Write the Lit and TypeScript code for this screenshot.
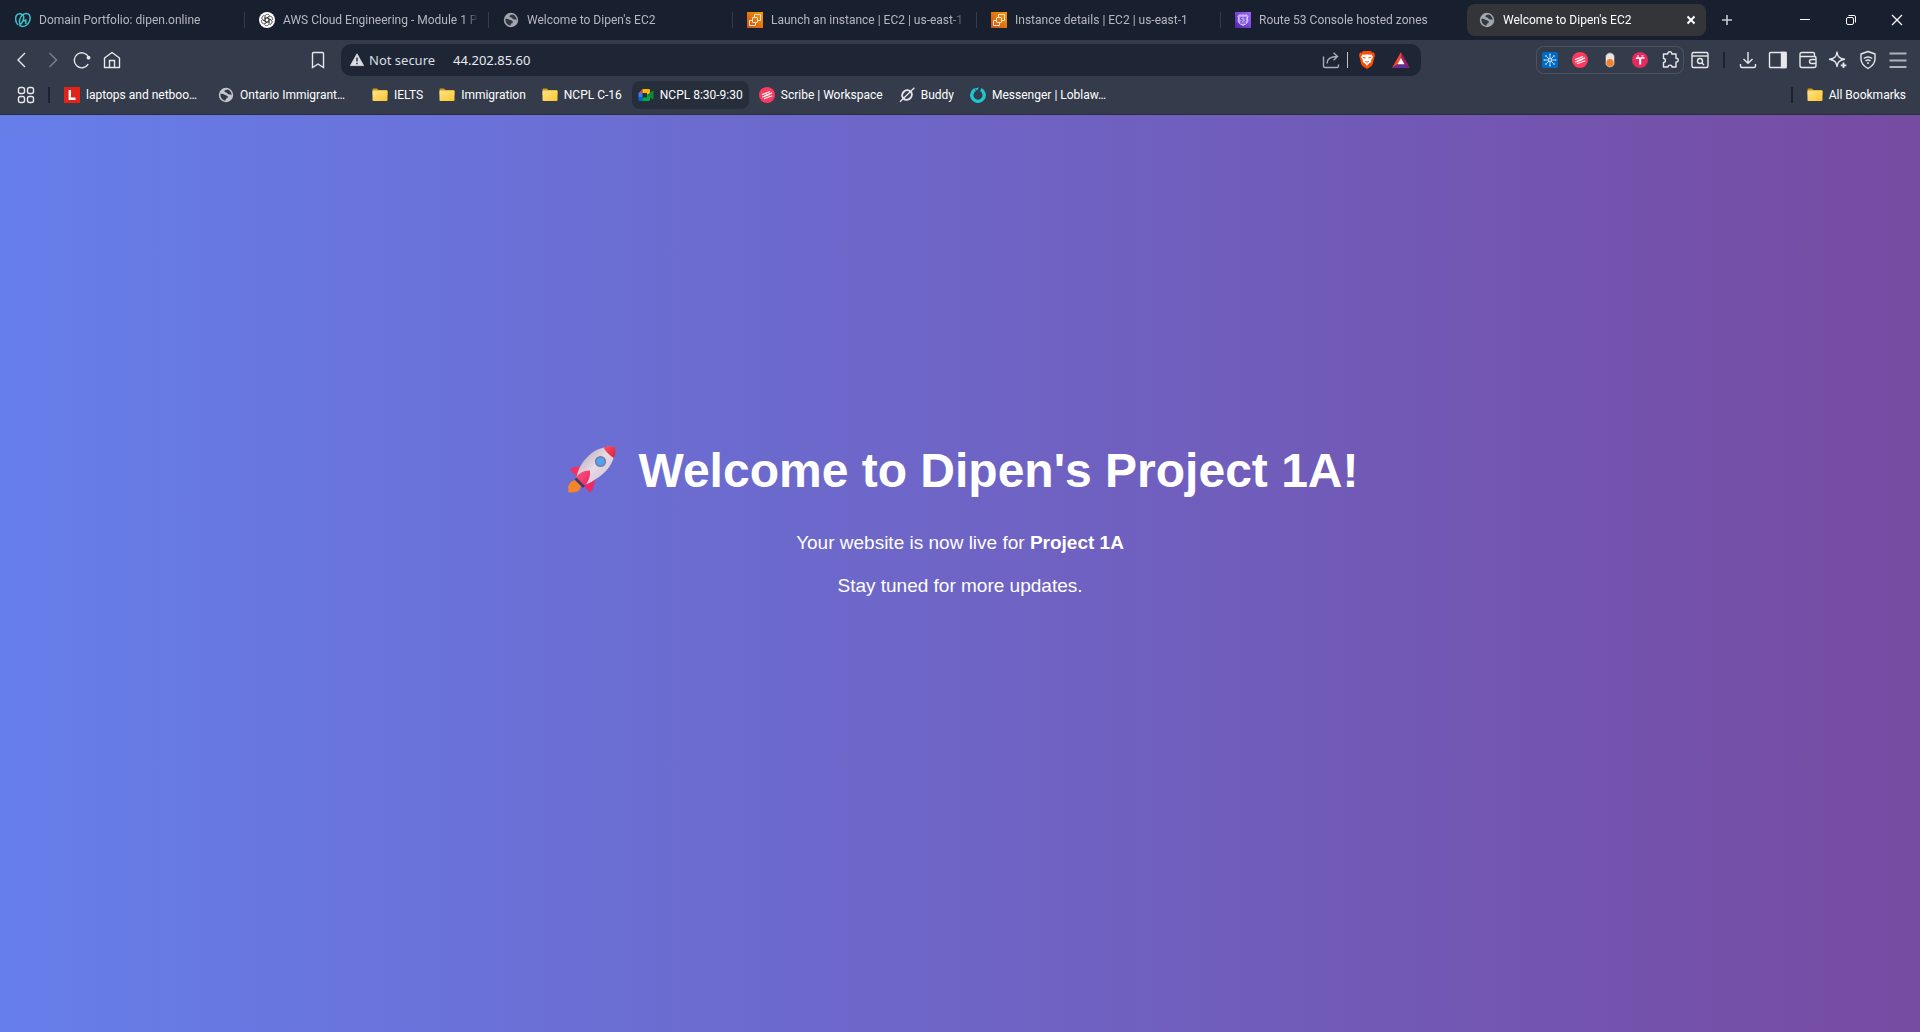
import { LitElement, html, svg, css, TemplateResult } from "lit";
import { customElement, property } from "lit/decorators.js";
import { classMap } from "lit/directives/class-map.js";

const icon = (size: number, body: TemplateResult, cls = "line") => html`
  <svg class=${cls} width=${size} height=${size} viewBox="0 0 ${size} ${size}" aria-hidden="true">${body}</svg>
`;

const globe = (tone: string) =>
  icon(16, svg`
    <circle cx="8" cy="8" r="7.200" fill=${tone} />
    <path d="M2.400 7 C3 6.400 4.800 6.600 7.200 8 C9 8.600 10.200 9 9.800 10.400 C9.400 11.400 8 11 7.800 12.200 L7.600 13.600 C4.400 13.400 2.200 10.600 2.400 7 Z" fill="#303844" />
    <path d="M9.600 2.600 C8 3.200 6.800 3 6.400 4.200 C6.400 5.600 8.400 5 9 6 C9.600 7 10.400 7.600 11.600 7.400 C12.600 7.200 13 8.200 13.600 8.400 C13.800 5.600 12.200 3.400 9.600 2.600 Z" fill="#303844" />
  `, "art");

const ec2 = icon(16, svg`
  <defs><linearGradient id="o" x1="0" y1="1" x2="1" y2="0"><stop offset="0" stop-color="#c8511b" /><stop offset="1" stop-color="#f90" /></linearGradient></defs>
  <rect width="16" height="16" fill="url(#o)" />
  <g fill="none" stroke="#ffe6cc" stroke-width="1">
    <rect x="5.500" y="5.500" width="5" height="5" rx=".5" />
    <path d="M7.500 5.500 V2.500 H13.500 V8.500 H10.500 M5.500 8.500 H2.500 V13.500 H8.500 V10.500" />
  </g>
`, "art");

const folder = icon(16, svg`
  <defs><linearGradient id="f" x1="0" y1="0" x2="1" y2="1"><stop offset="0" stop-color="#ffe48a" /><stop offset="1" stop-color="#fcc62f" /></linearGradient></defs>
  <path d="M.5 2.500 Q.5 1.500 1.500 1.500 H5 L6.500 3 H14.500 Q15.500 3 15.500 4 V8 H.5 Z" fill="#d39a17" />
  <rect x=".5" y="3.500" width="15" height="10.500" rx="1" fill="url(#f)" />
`, "art");

const scribe = icon(16, svg`
  <circle cx="8" cy="8" r="8" fill="#fb3a5d" />
  <path d="M3 7.600 L11 4.500 M5.500 8.700 L13 5.900 M3.200 10.300 L10.500 7.500 M5 11.800 L13.200 8.700" stroke="#fff" stroke-width="1.200" fill="none" />
`, "art");

const art: Record<string, TemplateResult> = {
  godaddy: icon(16, svg`
    <path d="M3.200 13 C.4 10.500 -.2 5.500 1.800 3 C3.500 1 6.500 1.400 8.200 3.400 C9.800 5.500 7.500 10.800 5.400 12.600 C3.500 9.800 4.600 5.200 7.600 2.900 C10 1 13.200 1 14.500 3.200 C16 6.500 14.600 11 11.600 13 C9 14.900 6.400 14.700 4.200 13.400 M8.400 9 L10.800 8 V12" fill="none" stroke="#3fc1c9" stroke-width="1.500" />
  `, "art"),
  gpt: icon(16, svg`
    <circle cx="8" cy="8" r="8" fill="#fff" />
    <g fill="none" stroke="#333" stroke-width=".8">
      ${[0, 60, 120, 180, 240, 300].map((a) => svg`<path transform="rotate(${a} 8 8)" d="M6 8.800 V4.600 C6 2 9.400 1.600 10.600 3.600 M6.200 6.800 L9.900 4.700" />`)}
    </g>
  `, "art"),
  globe: globe("#a3a7ad"),
  globeLight: globe("#c3c7cc"),
  ec2,
  route53: icon(16, svg`
    <defs><linearGradient id="r" x1="0" y1="1" x2="1" y2="0"><stop offset="0" stop-color="#4d27aa" /><stop offset="1" stop-color="#a166ff" /></linearGradient></defs>
    <rect width="16" height="16" fill="url(#r)" />
    <path d="M4.500 2.800 Q6.200 3.800 8 2.800 Q9.800 3.800 11.500 2.800 L13 4.500 Q12 6 12.800 8 Q13.600 11 8 13.400 Q2.400 11 3.200 8 Q4 6 3 4.500 Z" fill="#b79cf0" stroke="#e3d8ff" stroke-width=".9" />
    <path d="M7.300 5.500 H5.600 V7.300 Q7.400 7 7.300 8.600 Q7 9.900 5.200 9.300 M8.800 5.500 H10.800 L9.600 7.200 Q11 7.600 10.600 8.900 Q9.800 9.900 8.700 9.200 M5 11 H11" fill="none" stroke="#5a35b5" stroke-width=".8" />
  `, "art"),
  laptop: icon(16, svg`<rect width="16" height="16" fill="#e2231a" /><path d="M5.800 3 V11.800 H11.500" fill="none" stroke="#fff" stroke-width="2.400" />`, "art"),
  folder,
  meet: icon(16, svg`
    <path d="M4.500 2 V6 H.5 Z" fill="#ea4335" />
    <path d="M.5 6 H4.500 V10.500 H.5 Z" fill="#2684fc" />
    <path d="M.5 10.500 H4.500 V14 H1.700 Q.5 14 .5 12.800 Z" fill="#0066da" />
    <path d="M4.500 2 H10.800 Q12 2 12 3.200 V6.500 L9 8 V6 H4.500 Z" fill="#ffba00" />
    <path d="M4.500 10.500 H9 V8 L12 6.500 V12.800 Q12 14 10.800 14 H4.500 Z" fill="#00ac47" />
    <path d="M9.500 8 L14.600 3.800 Q15.500 3.300 15.500 4.300 V11.700 Q15.500 12.700 14.600 12.200 Z" fill="#0b8a3c" />
  `, "art"),
  scribe,
  buddy: icon(16, svg`
    <ellipse cx="8" cy="8" rx="5" ry="4.600" transform="rotate(-45 8 8)" fill="none" stroke="#e4e6e9" stroke-width="2" />
    <path d="M1 14.800 L15.400 .8" stroke="#e4e6e9" stroke-width="1.300" />
  `, "art"),
  messenger: icon(16, svg`<path d="M10.800 2.600 A6.200 6.200 0 1 1 5.200 2.600" fill="none" stroke="#1ec6cf" stroke-width="3.400" /><path d="M4.500 1.500 L9 .6 L7 3.500 Z" fill="#1ec6cf" />`, "art"),
  spark: icon(16, svg`
    <rect width="16" height="16" rx="1.500" fill="#0069c4" />
    ${[0, 45, 90, 135, 180, 225, 270, 315].map((a) => svg`
      <g transform="rotate(${a} 8 8)"><path d="M8 6.500 V3" stroke="#e6f3ff" stroke-width=".9" /><circle cx="8" cy="2.300" r=".8" fill="#e6f3ff" /></g>
    `)}
    <circle cx="8" cy="8" r="1.500" fill="none" stroke="#e6f3ff" stroke-width=".8" />
  `, "art"),
  toggle: icon(16, svg`<rect x="3.500" y=".8" width="9" height="14.400" rx="4.500" fill="#e9e7e5" stroke="#6b6259" stroke-width=".8" /><circle cx="8" cy="10.700" r="3.600" fill="#f5812a" />`, "art"),
  palm: icon(16, svg`
    <circle cx="8" cy="8" r="8" fill="#e52a5c" />
    <path d="M8.200 12.500 V7" fill="none" stroke="#fff" stroke-width="2" />
    <path d="M4 6.800 Q6 4.800 8.200 6.800 Q10.400 4.800 12.400 6.400" fill="none" stroke="#fff" stroke-width="1.600" />
    <path d="M5 4 H7 M9.500 3.800 H11.500" stroke="#fff" stroke-width="1" />
  `, "art"),
  brave: icon(20, svg`
    <path d="M6 1 H14 L15.600 2.800 L17 2.600 L18 5 L17.500 7 L15.800 14 Q15.200 15.700 13.500 16.800 L10 19 L6.500 16.800 Q4.800 15.700 4.200 14 L2.500 7 L2 5 L3 2.600 L4.400 2.800 Z" fill="#fb4b04" />
    <path d="M5.500 4.500 L8 4.800 L10 4.300 L12 4.800 L14.500 4.500 L16 7 L14 10.500 L14.300 12 L12 13.600 L10 15.800 L8 13.600 L5.700 12 L6 10.500 L4 7 Z" fill="#fff" />
    <path d="M5.800 7.300 L8.500 8 M14.200 7.300 L11.500 8 M8.300 11.300 L10 12.300 L11.700 11.300" stroke="#fb4b04" stroke-width="1" fill="none" />
  `, "art"),
  bat: icon(20, svg`
    <path d="M10 2 L1 18 L7 14 L10 8.500 Z" fill="#ff4724" />
    <path d="M10 2 L19 18 L13 14 L10 8.500 Z" fill="#9e1f63" />
    <path d="M1 18 H19 L13 14 H7 Z" fill="#662d91" />
    <path d="M10 8 L6.500 14.300 H13.500 Z" fill="#fff" />
  `, "art"),
};

const glyphs: Record<string, TemplateResult> = {
  back: icon(20, svg`<path d="M13 3 L6 10 L13 17" />`),
  forward: icon(20, svg`<path d="M7.500 3 L14.500 10 L7.500 17" />`),
  reload: icon(20, svg`<path d="M16.600 7.200 A7.500 7.500 0 1 0 16.200 14.200" /><circle cx="16.500" cy="7.700" r="1.900" fill="currentColor" stroke="none" />`),
  home: icon(20, svg`<path d="M2.500 8 L10 2.500 L17.500 8 V17.500 H2.500 Z" stroke-linejoin="round" /><path d="M7.500 17.500 V10.500 H12.500 V17.500" />`),
  bookmark: icon(20, svg`<path d="M4.500 3.500 Q4.500 2.500 5.500 2.500 H14.500 Q15.500 2.500 15.500 3.500 V17.500 L10 14 L4.500 17.500 Z" />`),
  share: icon(20, svg`<path d="M2.500 6.500 V16 Q2.500 17.500 4 17.500 H16 Q17.500 17.500 17.500 16 V14.500" /><path d="M6 13.500 C6 9 9 6.500 16.500 6.500 M12.500 2.800 L16.500 6.500 L12.500 10.200" />`),
  puzzle: icon(20, svg`<path d="M3.500 4 H7.800 C7.500 1 12 1 11.800 4 H16 V8.200 C19 8 19 12.300 16 12 V17 H12 C12.200 14.500 8 14.500 8 17 H3.500 V12.500 C6 12.500 6 8.500 3.500 8.500 Z" stroke-linejoin="round" />`),
  tabSearch: icon(20, svg`<rect x="2" y="2.500" width="16" height="15" rx="1.500" /><path d="M2 6 H18" /><circle cx="10" cy="11" r="2.500" /><path d="M12 13 L14 15" />`),
  download: icon(20, svg`<path d="M10 2 V13 M5.500 9 L10 13.300 L14.500 9 M2.500 14 V16 Q2.500 17.500 4 17.500 H16 Q17.500 17.500 17.500 16 V14" />`),
  sidebar: icon(20, svg`<rect x="1.500" y="2.500" width="16.500" height="15" rx="1" /><path d="M13.500 2.500 H18 V17.500 H13.500 Z" fill="currentColor" />`),
  wallet: icon(20, svg`<path d="M16.500 6.500 V4 Q16.500 2.500 15 2.500 H4 Q2 2.500 2 4.500 V15.500 Q2 17.500 4 17.500 H16 Q18 17.500 18 15.500 V8 Q18 6.500 16.500 6.500 H2.500 M18 9.500 H13.500 Q11.500 9.500 11.500 11.500 Q11.500 13.500 13.500 13.500 H18" />`),
  sparkle: icon(20, svg`<path d="M9 2 C9.600 6.500 11 8.200 16.500 9.300 C11 10.500 9.600 12 9 16.500 C8.400 12 7 10.500 1.500 9.300 C7 8.200 8.400 6.500 9 2 Z" stroke-linejoin="round" /><path d="M15.500 12.500 V18 M12.800 15.300 H18.300" stroke-width="1.800" />`),
  vpn: icon(20, svg`<path d="M10 1.500 L17 4 V9.500 Q16.500 15 10 18.500 Q3.500 15 3 9.500 V4 Z" stroke-linejoin="round" /><path d="M5.800 8.500 Q10 5.500 14.200 8.500 M7.500 10.900 Q10 9.200 12.500 10.900" /><circle cx="10" cy="13" r="1" fill="currentColor" stroke="none" />`),
  menu: icon(20, svg`<g stroke-width="1.800"><path d="M1.500 3.500 H18.500 M1.500 10.500 H18.500 M1.500 17 H18.500" /></g>`),
  grid: icon(20, svg`<rect x="2.500" y="2.500" width="6" height="6" rx="2" /><rect x="11.500" y="2.500" width="6" height="6" rx="2" /><rect x="2.500" y="11.500" width="6" height="6" rx="2" /><rect x="11.500" y="11.500" width="6" height="6" rx="2" />`),
  close: icon(16, svg`<path d="M4.500 4.500 L11.500 11.500 M11.500 4.500 L4.500 11.500" stroke-width="2" />`),
  plus: icon(16, svg`<path d="M8 3 V13 M3 8 H13" stroke-width="1.600" />`),
  minimize: icon(16, svg`<path d="M3 7.500 H13" stroke-width="1" />`),
  restore: icon(16, svg`<rect x="3.500" y="5.500" width="7" height="7" rx="1.500" stroke-width="1" /><path d="M5.500 3.500 H11 Q12.500 3.500 12.500 5 V10.500" stroke-width="1" />`),
  quit: icon(16, svg`<path d="M3 3 L13 13 M13 3 L3 13" stroke-width="1.200" />`),
  warning: icon(14, svg`<path d="M7 .8 L13.600 12.600 H.4 Z" fill="currentColor" stroke-linejoin="round" stroke-width=".8" /><path d="M7 4.500 V8.500 M7 9.800 V11.300" stroke="#1e2636" stroke-width="1.400" />`),
};

const rocket = html`
  <svg class="rocket" viewBox="0 0 64 60" role="img" aria-label="rocket">
    <defs>
      <linearGradient id="hull" x1="0" y1="0" x2="1" y2="1"><stop offset=".15" stop-color="#b9aebb" /><stop offset=".5" stop-color="#e6dbe6" /><stop offset="1" stop-color="#cdb9d2" /></linearGradient>
      <linearGradient id="nose" x1="0" y1="0" x2="1" y2="1"><stop offset="0" stop-color="#ff4f63" /><stop offset="1" stop-color="#d81f3f" /></linearGradient>
      <linearGradient id="fin" x1="0" y1="0" x2="1" y2="1"><stop offset="0" stop-color="#ff5a78" /><stop offset="1" stop-color="#e8206a" /></linearGradient>
    </defs>
    <path d="M14 40 Q8 42 7 47 Q8 49 7 52 Q10 53 13 52 Q18 53 20 46 Z" fill="#f5852a" />
    <path d="M8.500 29 Q14 27 19 26 L16 36 Q12 34 8.500 29 Z" fill="#f5305c" />
    <path d="M34 38 Q34 46 29.500 52.500 Q25 50 23 45 Z" fill="#ee2867" />
    <path d="M53 7 C41 5 29 12 22 22 Q17 29 15.500 37 L24 45 Q31 42 38 37 C49 29 55 19 53 7 Z" fill="url(#hull)" />
    <path d="M42.500 7.500 Q48 5.500 53.500 6.500 Q55.500 12 53 18 Q46 14 42.500 7.500 Z" fill="url(#nose)" />
    <circle cx="39.500" cy="21.500" r="5.600" fill="#777b99" /><circle cx="39.500" cy="21.500" r="3.900" fill="#4fa3f7" />
    <path d="M14.500 38 Q20 30 29 30.500 Q30 39 23 47 Z" fill="url(#fin)" />
    <path d="M13.500 39.500 L15.500 37.500 L24 46 L22 48 Z" fill="#3f3b66" />
  </svg>
`;

interface Tab { title: string; icon: string; active?: boolean }
interface Bookmark { title: string; icon: string; wide?: boolean; current?: boolean }

const tabs: Tab[] = [
  { title: "Domain Portfolio: dipen.online", icon: "godaddy" },
  { title: "AWS Cloud Engineering - Module 1 P", icon: "gpt" },
  { title: "Welcome to Dipen's EC2", icon: "globe" },
  { title: "Launch an instance | EC2 | us-east-1", icon: "ec2" },
  { title: "Instance details | EC2 | us-east-1", icon: "ec2" },
  { title: "Route 53 Console hosted zones", icon: "route53" },
  { title: "Welcome to Dipen's EC2", icon: "globe", active: true },
];

const bookmarks: Bookmark[] = [
  { title: "laptops and netboo…", icon: "laptop", wide: true },
  { title: "Ontario Immigrant…", icon: "globeLight", wide: true },
  { title: "IELTS", icon: "folder" },
  { title: "Immigration", icon: "folder" },
  { title: "NCPL C-16", icon: "folder" },
  { title: "NCPL 8:30-9:30", icon: "meet", current: true },
  { title: "Scribe | Workspace", icon: "scribe" },
  { title: "Buddy", icon: "buddy" },
  { title: "Messenger | Loblaw…", icon: "messenger", wide: true },
];

const shared = css`
  * { box-sizing: border-box; }
  button { font: inherit; color: inherit; background: none; border: 0; padding: 0; }
  svg { display: block; flex: none; }
  .line { fill: none; stroke: currentColor; stroke-width: 1.4px; }
`;

@customElement("tab-strip")
export class TabStrip extends LitElement {
  @property({ attribute: false }) tabs: Tab[] = [];

  static styles = [shared, css`
    :host { display: flex; align-items: center; height: 40px; padding-left: 3px; background: #18202f; color: #b5b9bf; }
    .tabs { display: flex; flex: 0 1 1708px; min-width: 0; }
    .slot { flex: 1 1 0; min-width: 0; display: flex; align-items: center; }
    .slot::after { content: ""; flex: none; width: 1px; height: 16px; margin: 0 2px; background: #353c48; }
    .slot.bare::after { background: none; }
    .tab { flex: 1; min-width: 0; display: flex; align-items: center; gap: 8px; height: 32px; padding: 0 7px 0 12px; border-radius: 8px; text-align: left; }
    .tab.active { background: #343539; color: #fff; }
    .title { flex: 1; min-width: 0; overflow: hidden; white-space: nowrap; mask-image: linear-gradient(to left, transparent, #000 16px); }
    .new { display: grid; place-items: center; width: 28px; height: 28px; margin: 0 auto 0 2px; color: #c9ccd1; }
    .window { display: flex; color: #fff; }
    .window button { display: grid; place-items: center; width: 46px; height: 40px; }
  `];

  render() {
    const last = this.tabs.length - 1;
    return html`
      <div class="tabs" role="tablist">
        ${this.tabs.map((t, i) => html`
          <div class=${classMap({ slot: true, bare: i === last || !!this.tabs[i + 1].active })}>
            <button class=${classMap({ tab: true, active: !!t.active })} role="tab" aria-selected=${t.active ? "true" : "false"}>
              ${art[t.icon]}<span class="title">${t.title}</span>${t.active ? glyphs.close : ""}
            </button>
          </div>
        `)}
      </div>
      <button class="new" aria-label="New tab">${glyphs.plus}</button>
      <div class="window">
        <button aria-label="Minimize">${glyphs.minimize}</button>
        <button aria-label="Restore">${glyphs.restore}</button>
        <button aria-label="Close">${glyphs.quit}</button>
      </div>
    `;
  }
}

@customElement("address-toolbar")
export class AddressToolbar extends LitElement {
  static styles = [shared, css`
    :host { display: flex; align-items: center; gap: 2px; padding: 4px 8px 0; color: #e6e8eb; font: 13px/16px "Noto Sans", sans-serif; }
    .tool { display: grid; place-items: center; flex: none; width: 28px; height: 28px; }
    .dim { color: #7b828e; }
    .save { margin-left: 176px; }
    .box { flex: 1; min-width: 0; display: flex; align-items: center; height: 32px; margin: 0 113px 0 7px; padding: 0 6px 0 9px; border-radius: 10px; background: #1e2636; }
    .security { display: flex; align-items: center; gap: 5px; height: 28px; color: #dcdee2; }
    .url { flex: 1; min-width: 0; margin: 0 0 0 18px; padding: 0; border: 0; background: none; color: #e8eaed; font: inherit; outline: 0; }
    .share { color: #a9adb5; }
    .rule { width: 1px; height: 16px; margin: 0 5px 0 2px; background: #c0c3c8; }
    .reward { margin-left: 6px; }
    .extensions { display: flex; gap: 2px; border-radius: 8px; box-shadow: inset 0 0 0 1px #4a5260; }
    .split { width: 2px; height: 16px; margin: 0 7px; background: #1b2333; }
    .menu { color: #aeb3ba; }
  `];

  private tool(label: string, body: TemplateResult, extra = "") {
    return html`<button class="tool ${extra}" aria-label=${label}>${body}</button>`;
  }

  render() {
    return html`
      ${this.tool("Back", glyphs.back)}
      ${this.tool("Forward", glyphs.forward, "dim")}
      ${this.tool("Reload", glyphs.reload)}
      ${this.tool("Home", glyphs.home)}
      ${this.tool("Bookmark this page", glyphs.bookmark, "save")}
      <div class="box">
        <button class="security">${glyphs.warning}<span>Not secure</span></button>
        <input class="url" type="text" aria-label="Address" .value=${"44.202.85.60"} spellcheck="false" />
        ${this.tool("Share", glyphs.share, "share")}
        <span class="rule"></span>
        ${this.tool("Shields", art.brave)}
        ${this.tool("Rewards", art.bat, "reward")}
      </div>
      <div class="extensions">
        ${this.tool("Spark", art.spark)}
        ${this.tool("Scribe", art.scribe)}
        ${this.tool("Toggle", art.toggle)}
        ${this.tool("Palm", art.palm)}
        ${this.tool("Extensions", glyphs.puzzle)}
      </div>
      ${this.tool("Search tabs", glyphs.tabSearch)}
      <span class="split"></span>
      ${this.tool("Downloads", glyphs.download)}
      ${this.tool("Sidebar", glyphs.sidebar)}
      ${this.tool("Wallet", glyphs.wallet)}
      ${this.tool("Assistant", glyphs.sparkle)}
      ${this.tool("VPN", glyphs.vpn)}
      ${this.tool("Menu", glyphs.menu, "menu")}
    `;
  }
}

@customElement("bookmark-bar")
export class BookmarkBar extends LitElement {
  @property({ attribute: false }) items: Bookmark[] = [];

  static styles = [shared, css`
    :host { display: flex; align-items: center; gap: 4px; height: 38px; padding: 0 8px 0 12px; color: #fff; }
    .apps { display: grid; place-items: center; width: 28px; height: 28px; color: #e6e8eb; }
    .split { width: 2px; height: 16px; margin: 0 4px; background: #1b2333; }
    .item { display: flex; align-items: center; gap: 6px; height: 28px; padding: 0 6px; border-radius: 8px; color: inherit; text-decoration: none; white-space: nowrap; }
    .wide { width: 150px; }
    .current { background: #262e3c; }
    .end { display: flex; align-items: center; gap: 4px; margin-left: auto; }
  `];

  render() {
    return html`
      <button class="apps" aria-label="Apps">${glyphs.grid}</button>
      <span class="split"></span>
      ${this.items.map((b) => html`
        <a class=${classMap({ item: true, wide: !!b.wide, current: !!b.current })} href="#">${art[b.icon]}<span>${b.title}</span></a>
      `)}
      <div class="end">
        <span class="split"></span>
        <button class="item">${art.folder}<span>All Bookmarks</span></button>
      </div>
    `;
  }
}

@customElement("app-root")
export class AppRoot extends LitElement {
  static styles = [shared, css`
    :host { display: flex; flex-direction: column; min-height: 100vh; font: 12px/16px Roboto, sans-serif; }
    .chrome { background: #343c4c; border-bottom: 1px solid #2b2e3a; }
    .page { flex: 1; padding-top: 328px; background: linear-gradient(to right, #667eea, #764ba2); color: #fff; text-align: center; font: 19px/22px "Liberation Sans", sans-serif; }
    .heading { display: flex; justify-content: center; align-items: center; gap: 13px; margin: 0 0 34px; font-size: 48px; line-height: 55px; font-weight: 700; }
    .rocket { width: 64px; height: 60px; margin: -3px 0 -2px; }
    .note { margin: 0 0 21px; }
  `];

  render() {
    return html`
      <header class="chrome">
        <tab-strip .tabs=${tabs}></tab-strip>
        <address-toolbar></address-toolbar>
        <bookmark-bar .items=${bookmarks}></bookmark-bar>
      </header>
      <main class="page">
        <h1 class="heading">${rocket}<span>Welcome to Dipen's Project 1A!</span></h1>
        <p class="note">Your website is now live for <strong>Project 1A</strong></p>
        <p class="note">Stay tuned for more updates.</p>
      </main>
    `;
  }
}
